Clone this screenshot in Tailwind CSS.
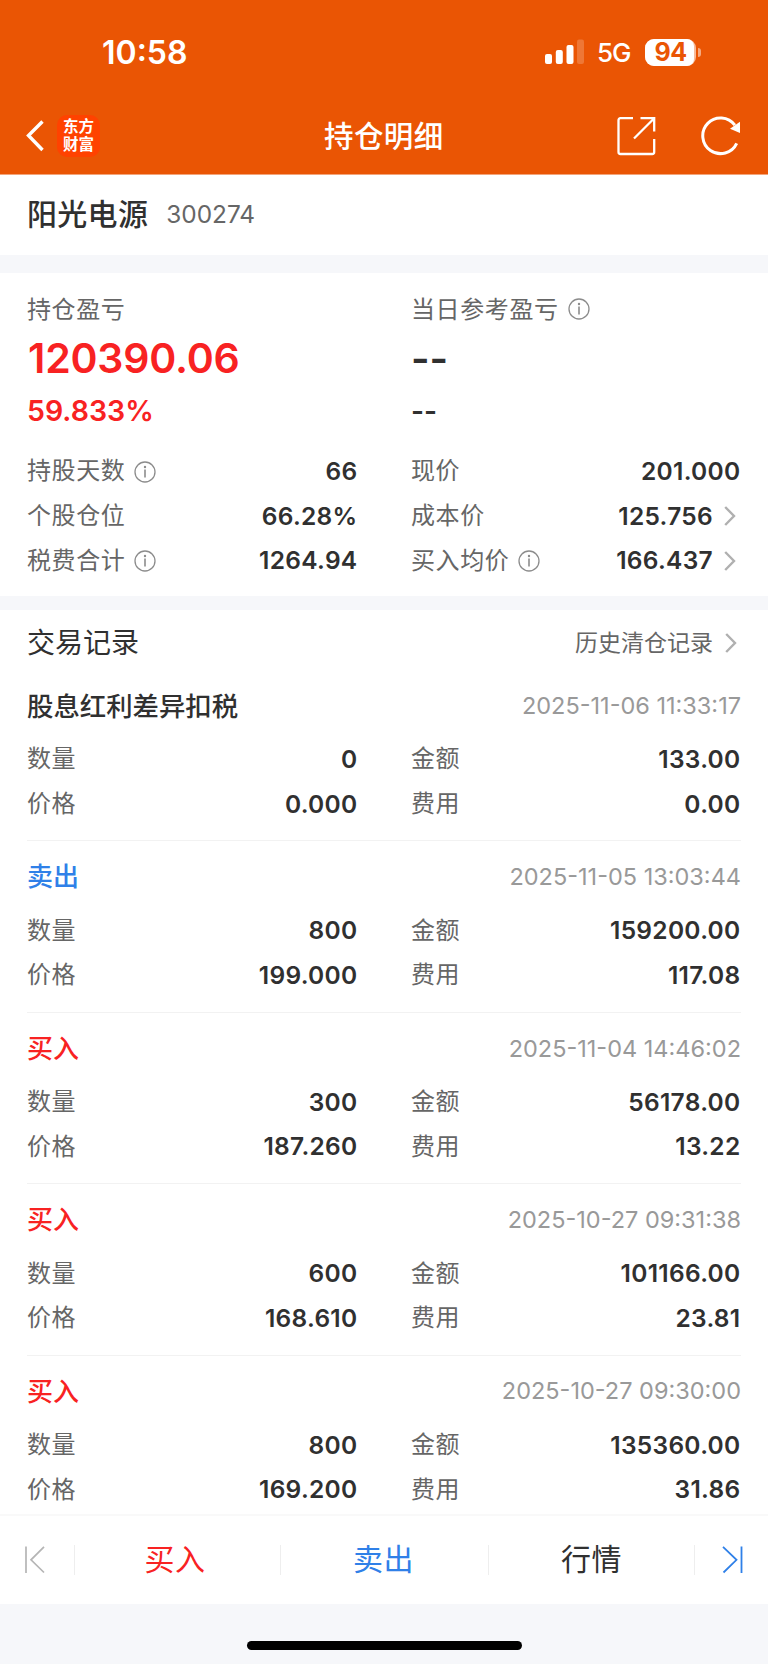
<!DOCTYPE html>
<html lang="zh-CN">
<head>
  <meta charset="UTF-8" />
  <meta name="viewport" content="width=device-width, initial-scale=1.0"/>
  <title>持仓明细</title>
  <script src="https://cdn.jsdelivr.net/npm/@tailwindcss/browser@4"></script>
</head>
<body class="bg-white">
  <!-- shared icons -->
  <svg class="hidden">
    <symbol id="info" viewBox="0 0 22 22">
      <circle cx="11" cy="11" r="10" fill="none" stroke="#8c8c8c" stroke-width="1.3"/>
      <circle cx="11" cy="6" r="1.2" fill="#8c8c8c"/>
      <path d="M11 8.600v7.800" stroke="#8c8c8c" stroke-width="1.6"/>
    </symbol>
    <symbol id="arrow" viewBox="0 0 12 20">
      <path d="M1.200 1l8.800 9-8.800 9" fill="none" stroke="#b0b0b0" stroke-width="2.400"/>
    </symbol>
  </svg>

  <div class="w-[768px] h-[1664px] flex flex-col overflow-hidden bg-[#f6f7fa] text-[#303030] font-['Inter','Noto_Sans_CJK_SC',sans-serif]">
    <header class="h-[175px] shrink-0 bg-[#ea5504] text-white border-b border-[#f3a47a]">
      <div class="h-[98px] pt-[6px] pl-[102px] pr-[67px] flex items-center">
        <span class="pt-[2px] text-[32px] font-semibold leading-none">10:58</span>
        <svg class="ml-auto w-[40px] h-[26px]" viewBox="0 0 40 26">
          <rect x="1" y="15" width="7" height="10" rx="2" fill="#fff"/>
          <rect x="11.800" y="11" width="7" height="14" rx="2" fill="#fff"/>
          <rect x="22.500" y="6" width="7" height="19" rx="2" fill="#fff"/>
          <rect x="33" y="0.5" width="7" height="24.5" rx="2" fill="#fff" opacity=".2"/>
        </svg>
        <span class="ml-[13px] w-[35px] pt-[2px] text-[26px] font-medium leading-none tracking-[-1px]">5G</span>
        <div class="ml-[13px] w-[51px] h-[27px] rounded-[9px] bg-white/60">
          <div class="w-[49px] h-[27px] rounded-l-[9px] rounded-r-[7px] bg-white text-[#ea5504] text-[25px] font-bold leading-[27px] text-center pl-[2px] tracking-[-0.5px]">94</div>
        </div>
        <div class="ml-[2px] w-[3px] h-[9px] rounded-r-full bg-white/50"></div>
      </div>
      <div class="h-[76px] pl-[25px] pr-[27px] flex items-center">
        <svg class="w-[20px] h-[34px]" viewBox="0 0 20 34"><path d="M17.500 2.500L3.500 16.500 17.500 31" fill="none" stroke="#fff" stroke-width="3.4"/></svg>
        <div class="ml-[12px] w-[43px] h-[42px] rounded-[10px] bg-[#ff4200] flex flex-col items-center justify-center pb-px text-[15.500px] leading-[18px] font-bold">
          <span>东方</span><span>财富</span>
        </div>
        <h1 class="ml-[224px] pt-[2px] text-[29.500px] tracking-[0.4px] font-medium leading-none">持仓明细</h1>
        <svg class="ml-auto w-[40px] h-[40px]" viewBox="0 0 40 40" fill="none" stroke="#fff" stroke-width="2.300">
          <path d="M17 2.200H4.500q-2 0-2 2V36q0 2 2 2h31.700q2 0 2-2V23"/>
          <path d="M24.500 2.200H38.200V15.500M37.500 3L18 22.500"/>
        </svg>
        <svg class="ml-[44px] w-[41px] h-[40px]" viewBox="0 0 41 40">
          <path d="M34.900 9.200A17.800 17.800 0 1 0 36.700 27.300" fill="none" stroke="#fff" stroke-width="3"/>
          <path d="M40 5.700V17L30 12.700z" fill="#fff"/>
        </svg>
      </div>
    </header>

    <section class="h-[80px] shrink-0 bg-white px-[27px] flex items-center">
      <h2 class="pb-[3px] text-[30px] tracking-[0.3px] font-medium leading-none">阳光电源</h2>
      <span class="ml-[18px] pb-px text-[24.400px] text-[#666]">300274</span>
    </section>

    <section class="mt-[18px] h-[323px] shrink-0 bg-white px-[27px] pt-[23px]">
      <div class="grid grid-cols-[330px_329px] gap-x-[54px]">
        <div>
          <div class="h-[28px] flex items-center text-[24px] tracking-[0.6px] text-[#666]">持仓盈亏</div>
          <div class="mt-[10px] h-[48px] leading-[48px] pl-px text-[41px] tracking-[-0.2px] font-semibold text-[#f82222]">120390.06</div>
          <div class="mt-[11px] h-[36px] leading-[36px] text-[28.500px] font-semibold text-[#f82222]">59.833%</div>
        </div>
        <div>
          <div class="h-[28px] flex items-center text-[24px] tracking-[0.6px] text-[#666]">当日参考盈亏<svg class="ml-[9px] mb-[2px] size-[22px]"><use href="#info"/></svg></div>
          <div class="mt-[10px] pt-px h-[48px] leading-[48px] text-[40px] font-semibold">--</div>
          <div class="mt-[11px] h-[36px] leading-[36px] text-[28px] font-semibold">--</div>
        </div>
      </div>
      <div class="mt-[20px] grid grid-cols-[330px_329px] gap-x-[54px] auto-rows-[44.7px] text-[24px]">
        <div class="flex items-center"><span class="tracking-[0.6px] text-[#666]">持股天数</span><svg class="ml-[9px] mt-px size-[22px]"><use href="#info"/></svg><b class="ml-auto font-semibold text-[24.500px] tracking-[0.3px] mr-[-0.5px]">66</b></div>
        <div class="flex items-center"><span class="tracking-[0.6px] text-[#666]">现价</span><b class="ml-auto font-semibold text-[24.500px] tracking-[0.3px] mr-[-0.5px]">201.000</b></div>
        <div class="flex items-center"><span class="tracking-[0.6px] text-[#666]">个股仓位</span><b class="ml-auto font-semibold text-[24.500px] tracking-[0.3px] mr-[-0.5px]">66.28%</b></div>
        <div class="flex items-center"><span class="tracking-[0.6px] text-[#666]">成本价</span><b class="ml-auto font-semibold text-[24.500px] tracking-[0.3px]">125.756</b><svg class="ml-[11px] mr-[4px] w-[12px] h-[20px]"><use href="#arrow"/></svg></div>
        <div class="flex items-center"><span class="tracking-[0.6px] text-[#666]">税费合计</span><svg class="ml-[9px] mt-px size-[22px]"><use href="#info"/></svg><b class="ml-auto font-semibold text-[24.500px] tracking-[0.3px] mr-[-0.5px]">1264.94</b></div>
        <div class="flex items-center"><span class="tracking-[0.6px] text-[#666]">买入均价</span><svg class="ml-[9px] mt-px size-[22px]"><use href="#info"/></svg><b class="ml-auto font-semibold text-[24.500px] tracking-[0.3px]">166.437</b><svg class="ml-[11px] mr-[4px] w-[12px] h-[20px]"><use href="#arrow"/></svg></div>
      </div>
    </section>

    <section class="mt-[14px] h-[904px] shrink-0 bg-white px-[27px] overflow-hidden">
      <div class="h-[60px] pt-[6px] flex items-center">
        <h3 class="text-[28px] leading-none">交易记录</h3>
        <span class="ml-auto text-[23px] leading-none text-[#666]">历史清仓记录</span>
        <svg class="ml-[12px] mr-[4px] w-[12px] h-[20px]"><use href="#arrow"/></svg>
      </div>
      <div id="records"></div>
    </section>

    <nav class="h-[90px] shrink-0 border-t-2 border-[#f9f9f9] bg-white px-[24px] flex items-center text-[30px]">
      <svg class="w-[50px] h-[28px]" viewBox="0 0 50 28" fill="none" stroke="#b5b5b5" stroke-width="1.700"><path d="M2 0.500V27M20 0.800L7 13.800 20 26.500"/></svg>
      <div class="w-px h-[30px] bg-[#eee]"></div>
      <button class="w-[205px] pr-[5px] pb-[2px] tracking-[0.4px] text-[#f82222]">买入</button>
      <div class="w-px h-[30px] bg-[#eee]"></div>
      <button class="w-[207px] pr-[2px] pb-[2px] tracking-[0.4px] text-[#2f80e8]">卖出</button>
      <div class="w-px h-[30px] bg-[#eee]"></div>
      <button class="w-[205px] pb-[2px] tracking-[0.4px]">行情</button>
      <div class="w-px h-[30px] bg-[#eee]"></div>
      <svg class="ml-auto w-[22px] h-[28px]" viewBox="0 0 22 28" fill="none" stroke="#2f80e8" stroke-width="1.800"><path d="M19.500 0.500V27M1 0.800L14.500 13.800 1.500 26.500"/></svg>
    </nav>

    <div class="h-[60px] shrink-0 pt-[37px]">
      <div class="mx-auto w-[275px] h-[9px] rounded-full bg-black"></div>
    </div>
  </div>

  <script>
    // type, color, time, quantity, amount, price, fee
    const records = [
      ['股息红利差异扣税', 'text-[26.400px] text-[#303030]', '2025-11-06 11:33:17', '0', '133.00', '0.000', '0.00'],
      ['卖出', 'text-[26px] text-[#2f80e8]', '2025-11-05 13:03:44', '800', '159200.00', '199.000', '117.08'],
      ['买入', 'text-[26px] text-[#f82222]', '2025-11-04 14:46:02', '300', '56178.00', '187.260', '13.22'],
      ['买入', 'text-[26px] text-[#f82222]', '2025-10-27 09:31:38', '600', '101166.00', '168.610', '23.81'],
      ['买入', 'text-[26px] text-[#f82222]', '2025-10-27 09:30:00', '800', '135360.00', '169.200', '31.86'],
    ];
    const cell = (label, value) => `
      <div class="flex items-center"><span class="tracking-[0.6px] text-[#666]">${label}</span><b class="ml-auto font-semibold text-[24.500px] tracking-[0.3px] mr-[-0.5px]">${value}</b></div>`;
    document.getElementById('records').innerHTML = records.map(([type, color, time, qty, amount, price, fee]) => `
      <div class="h-[171.4px] pt-[11px] border-b border-[#f2f2f2]">
        <div class="h-[50px] flex items-center">
          <span class="font-medium leading-none ${color}">${type}</span>
          <span class="ml-auto pb-px text-[23.500px] leading-none text-[#999]">${time}</span>
        </div>
        <div class="mt-[6px] grid grid-cols-[330px_329px] gap-x-[54px] auto-rows-[44.7px] text-[24px]">
          ${cell('数量', qty)}${cell('金额', amount)}${cell('价格', price)}${cell('费用', fee)}
        </div>
      </div>`).join('');
  </script>
</body>
</html>
